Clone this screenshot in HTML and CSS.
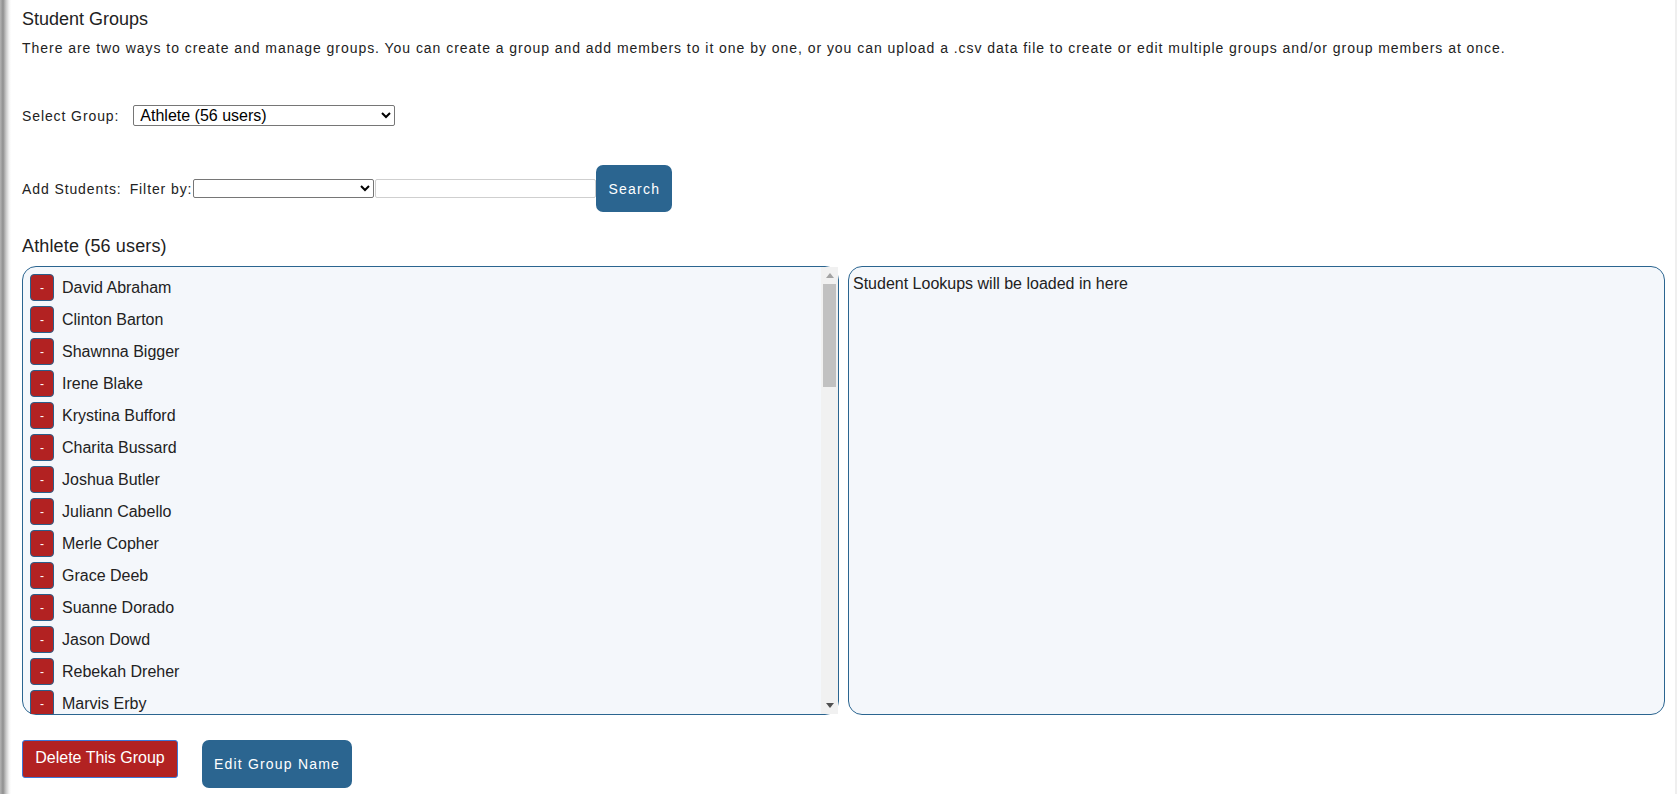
FILE: index.html
```html
<!DOCTYPE html>
<html lang="en">
<head>
<meta charset="utf-8">
<title>Student Groups</title>
<link rel="stylesheet" href="styles.css">
</head>
<body>
<div class="page">
  <h1 class="title">Student Groups</h1>
  <p class="intro">There are two ways to create and manage groups. You can create a group and add members to it one by one, or you can upload a .csv data file to create or edit multiple groups and/or group members at once.</p>

  <div class="select-row">
    <label class="label">Select Group:</label>
    <select class="group-select"><option>Athlete (56 users)</option></select>
  </div>

  <div class="add-row">
    <span class="label">Add Students:</span>
    <span class="label filter-label">Filter by:</span>
    <select class="filter-select"><option></option></select>
    <input class="filter-input" type="text">
    <button class="btn-blue btn-search">Search</button>
  </div>

  <h2 class="group-name">Athlete (56 users)</h2>

  <div class="panels">
    <div class="panel list-panel">
      <div class="list-scroll">
        <div class="member"><button class="btn-minus">-</button><span>David Abraham</span></div>
        <div class="member"><button class="btn-minus">-</button><span>Clinton Barton</span></div>
        <div class="member"><button class="btn-minus">-</button><span>Shawnna Bigger</span></div>
        <div class="member"><button class="btn-minus">-</button><span>Irene Blake</span></div>
        <div class="member"><button class="btn-minus">-</button><span>Krystina Bufford</span></div>
        <div class="member"><button class="btn-minus">-</button><span>Charita Bussard</span></div>
        <div class="member"><button class="btn-minus">-</button><span>Joshua Butler</span></div>
        <div class="member"><button class="btn-minus">-</button><span>Juliann Cabello</span></div>
        <div class="member"><button class="btn-minus">-</button><span>Merle Copher</span></div>
        <div class="member"><button class="btn-minus">-</button><span>Grace Deeb</span></div>
        <div class="member"><button class="btn-minus">-</button><span>Suanne Dorado</span></div>
        <div class="member"><button class="btn-minus">-</button><span>Jason Dowd</span></div>
        <div class="member"><button class="btn-minus">-</button><span>Rebekah Dreher</span></div>
        <div class="member"><button class="btn-minus">-</button><span>Marvis Erby</span></div>
        <div class="member"><button class="btn-minus">-</button><span>Lorena Fagan</span></div>
        <div class="member"><button class="btn-minus">-</button><span>Dwight Farley</span></div>
        <div class="member"><button class="btn-minus">-</button><span>Alisha Fenton</span></div>
        <div class="member"><button class="btn-minus">-</button><span>Marcus Garber</span></div>
        <div class="member"><button class="btn-minus">-</button><span>Tessa Gilmore</span></div>
        <div class="member"><button class="btn-minus">-</button><span>Ronald Grady</span></div>
        <div class="member"><button class="btn-minus">-</button><span>Shelby Hanson</span></div>
        <div class="member"><button class="btn-minus">-</button><span>Keith Harlow</span></div>
        <div class="member"><button class="btn-minus">-</button><span>Nadia Hensley</span></div>
        <div class="member"><button class="btn-minus">-</button><span>Owen Hoffman</span></div>
        <div class="member"><button class="btn-minus">-</button><span>Priscilla Irwin</span></div>
        <div class="member"><button class="btn-minus">-</button><span>Terrence Jarvis</span></div>
        <div class="member"><button class="btn-minus">-</button><span>Molly Jenkins</span></div>
        <div class="member"><button class="btn-minus">-</button><span>Derek Keller</span></div>
        <div class="member"><button class="btn-minus">-</button><span>Vanessa Kirby</span></div>
        <div class="member"><button class="btn-minus">-</button><span>Gavin Lambert</span></div>
        <div class="member"><button class="btn-minus">-</button><span>Carla Lindsey</span></div>
        <div class="member"><button class="btn-minus">-</button><span>Trevor Maddox</span></div>
        <div class="member"><button class="btn-minus">-</button><span>Jenna Marsh</span></div>
        <div class="member"><button class="btn-minus">-</button><span>Luis Medina</span></div>
        <div class="member"><button class="btn-minus">-</button><span>Heidi Morrow</span></div>
        <div class="member"><button class="btn-minus">-</button><span>Calvin Nash</span></div>
        <div class="member"><button class="btn-minus">-</button><span>Brianna Nolan</span></div>
        <div class="member"><button class="btn-minus">-</button><span>Wesley Ortiz</span></div>
        <div class="member"><button class="btn-minus">-</button><span>Kendra Parish</span></div>
        <div class="member"><button class="btn-minus">-</button><span>Jared Pruitt</span></div>
        <div class="member"><button class="btn-minus">-</button><span>Fiona Quinn</span></div>
        <div class="member"><button class="btn-minus">-</button><span>Eli Ramsey</span></div>
        <div class="member"><button class="btn-minus">-</button><span>Lydia Rhodes</span></div>
        <div class="member"><button class="btn-minus">-</button><span>Miles Sawyer</span></div>
        <div class="member"><button class="btn-minus">-</button><span>Paige Sheldon</span></div>
        <div class="member"><button class="btn-minus">-</button><span>Colin Stroud</span></div>
        <div class="member"><button class="btn-minus">-</button><span>Erin Tate</span></div>
        <div class="member"><button class="btn-minus">-</button><span>Grant Tillman</span></div>
        <div class="member"><button class="btn-minus">-</button><span>Naomi Upton</span></div>
        <div class="member"><button class="btn-minus">-</button><span>Victor Vance</span></div>
        <div class="member"><button class="btn-minus">-</button><span>Hannah Walker</span></div>
        <div class="member"><button class="btn-minus">-</button><span>Isaac Webb</span></div>
        <div class="member"><button class="btn-minus">-</button><span>Regina Whitley</span></div>
        <div class="member"><button class="btn-minus">-</button><span>Tyler Wolfe</span></div>
        <div class="member"><button class="btn-minus">-</button><span>Megan Yates</span></div>
        <div class="member"><button class="btn-minus">-</button><span>Zachary Young</span></div>
      </div>
      <div class="scrollbar" aria-hidden="true">
        <div class="sb-btn"><svg width="8" height="5" viewBox="0 0 8 5"><polygon points="0,5 8,5 4,0" fill="#a3a3a3"/></svg></div>
        <div class="sb-track"><div class="sb-thumb"></div></div>
        <div class="sb-btn"><svg width="8" height="5" viewBox="0 0 8 5"><polygon points="0,0 8,0 4,5" fill="#505050"/></svg></div>
      </div>
    </div>
    <div class="panel lookup">Student Lookups will be loaded in here</div>
  </div>

  <div class="actions">
    <button class="btn-delete">Delete This Group</button>
    <button class="btn-blue btn-edit">Edit Group Name</button>
  </div>
</div>
</body>
</html>
```

FILE: styles.css
```css
html {
  background:
    linear-gradient(to right, #b4b4b4 0, #8f8f8f 3px, #c8c8c8 6px, #f2f2f2 9px, rgba(255,255,255,0) 11px) left top / 12px 100% no-repeat,
    linear-gradient(#efefef, #efefef) right top / 2px 100% no-repeat,
    #ffffff;
  height: 100%;
}

body {
  margin: 0;
  font-family: "Liberation Sans", Arial, sans-serif;
  color: #222222;
  overflow: hidden;
}

.page {
  padding: 8px 12px 0 22px;
}

.title {
  margin: 0;
  font-size: 18px;
  font-weight: normal;
  line-height: 22px;
  color: #222222;
}

.intro {
  margin: 9px 0 0;
  font-size: 14px;
  line-height: 18px;
  letter-spacing: 0.96px;
}

.label {
  font-size: 14px;
  letter-spacing: 0.9px;
}

.select-row {
  display: flex;
  align-items: center;
  margin-top: 48px;
  height: 21px;
}

.group-select {
  margin-left: 14px;
  width: 262px;
  height: 21px;
  font-family: "Liberation Sans", Arial, sans-serif;
  font-size: 16px;
  color: #000000;
  border: 1px solid #767676;
  border-radius: 2px;
  background: #ffffff;
  padding: 0 2px;
}

.add-row {
  display: flex;
  align-items: center;
  margin-top: 39px;
  height: 47px;
}

.filter-label {
  margin-left: 8px;
}

.filter-select {
  margin-left: 1px;
  width: 181px;
  height: 19px;
  border: 1px solid #767676;
  border-radius: 2px;
  background: #ffffff;
}

.filter-input {
  margin-left: 1px;
  width: 221px;
  height: 19px;
  box-sizing: border-box;
  border: 1px solid #cfcfcf;
  border-radius: 2px;
  padding: 0 3px;
}

.btn-blue {
  background: #2b6590;
  color: #ffffff;
  border: none;
  border-radius: 7px;
  font-family: "Liberation Sans", Arial, sans-serif;
  font-size: 14px;
  letter-spacing: 1.2px;
  padding: 0;
  cursor: pointer;
}

.btn-search {
  width: 76px;
  height: 47px;
}

.group-name {
  margin: 24px 0 0;
  font-size: 18px;
  font-weight: normal;
  line-height: 20px;
  letter-spacing: 0.15px;
  color: #222222;
}

.panels {
  display: grid;
  grid-template-columns: 1fr 1fr;
  gap: 9px;
  margin-top: 10px;
}

.panel {
  height: 449px;
  box-sizing: border-box;
  border: 1px solid #2b6590;
  border-radius: 14px;
  background: #f4f7fb;
}

.list-panel {
  display: flex;
}

.list-scroll {
  flex: 1;
  overflow: hidden;
  box-sizing: border-box;
  padding: 7px 0 0 7px;
}

.scrollbar {
  width: 17px;
  display: flex;
  flex-direction: column;
  background: #f1f1f1;
}

.sb-btn {
  height: 17px;
  display: flex;
  align-items: center;
  justify-content: center;
}

.sb-track {
  flex: 1;
  padding: 0 2px;
}

.sb-thumb {
  height: 103px;
  background: #c1c1c1;
}

.member {
  display: flex;
  align-items: center;
  gap: 8px;
  height: 27px;
  margin-bottom: 5px;
  font-size: 16px;
}

.btn-minus {
  width: 24px;
  height: 27px;
  padding: 0;
  background: #b22222;
  border: 1px solid #2b5f8a;
  border-radius: 4px;
  color: #ffffff;
  font-family: "Liberation Sans", Arial, sans-serif;
  font-size: 12px;
  line-height: 1;
  cursor: pointer;
}

.lookup {
  padding: 8px 4px;
  font-size: 16px;
  line-height: 18px;
}

.actions {
  display: flex;
  align-items: flex-start;
  gap: 24px;
  margin-top: 25px;
}

.btn-delete {
  width: 156px;
  height: 38px;
  padding: 0 0 3px;
  background: #b22222;
  color: #ffffff;
  border: 1px solid #3c78d8;
  border-radius: 3px;
  font-family: "Liberation Sans", Arial, sans-serif;
  font-size: 16px;
  cursor: pointer;
}

.btn-edit {
  width: 150px;
  height: 48px;
}
```
